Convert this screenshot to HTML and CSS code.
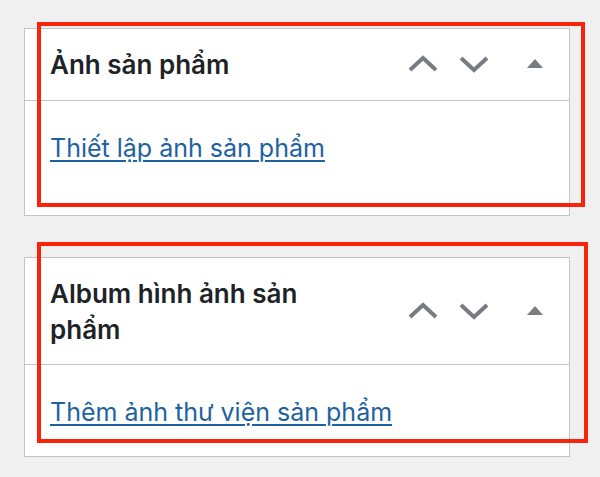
FILE: index.html
```html
<!DOCTYPE html>
<html lang="vi">
<head>
<meta charset="utf-8">
<title>Metaboxes</title>
<link rel="stylesheet" href="styles.css">
</head>
<body>
<div class="page">
  <div class="box box-image">
    <div class="box-head">
      <h2 class="box-title">Ảnh sản phẩm</h2>
      <div class="actions">
        <button class="act"><svg width="30" height="18" viewBox="0 0 30 18"><polyline points="2,15 15,3 28,15" fill="none" stroke="#787c82" stroke-width="4"/></svg></button>
        <button class="act"><svg width="30" height="18" viewBox="0 0 30 18"><polyline points="2,3 15,15 28,3" fill="none" stroke="#787c82" stroke-width="4"/></svg></button>
        <button class="act toggle"><svg width="16" height="9" viewBox="0 0 16 9"><polygon points="0,9 8,0 16,9" fill="#787c82"/></svg></button>
      </div>
    </div>
    <div class="box-body body-image">
      <a class="box-link" href="#">Thiết lập ảnh sản phẩm</a>
    </div>
  </div>

  <div class="box box-gallery">
    <div class="box-head">
      <h2 class="box-title">Album hình ảnh sản phẩm</h2>
      <div class="actions">
        <button class="act"><svg width="30" height="18" viewBox="0 0 30 18"><polyline points="2,15 15,3 28,15" fill="none" stroke="#787c82" stroke-width="4"/></svg></button>
        <button class="act"><svg width="30" height="18" viewBox="0 0 30 18"><polyline points="2,3 15,15 28,3" fill="none" stroke="#787c82" stroke-width="4"/></svg></button>
        <button class="act toggle"><svg width="16" height="9" viewBox="0 0 16 9"><polygon points="0,9 8,0 16,9" fill="#787c82"/></svg></button>
      </div>
    </div>
    <div class="box-body body-gallery">
      <a class="box-link" href="#">Thêm ảnh thư viện sản phẩm</a>
    </div>
  </div>

  <div class="mark mark-1"></div>
  <div class="mark mark-2"></div>
</div>
</body>
</html>
```

FILE: styles.css
```css
* { box-sizing: border-box; }
html, body {
  margin: 0;
  background: #f0f0f1;
  font-family: Inter, "Noto Sans", sans-serif;
}
.page {
  position: relative;
  width: 600px;
  height: 477px;
  padding: 28px 0 0 24px;
}
.box {
  width: 546px;
  background: #fff;
  border: 1px solid #c3c4c7;
}
.box-gallery { margin-top: 41px; }
.box-head {
  display: flex;
  align-items: center;
  border-bottom: 1px solid #c3c4c7;
  padding: 16px 9px 17px 25px;
}
.box-gallery .box-head { padding-bottom: 16px; }
.box-title {
  flex: 1;
  margin: 0;
  padding: 2px 60px 0 0;
  font-size: 26px;
  line-height: 36px;
  font-weight: 600;
  color: #1d2327;
}
.actions {
  display: flex;
  align-items: center;
}
.act {
  width: 51px;
  height: 35px;
  padding: 0;
  border: 0;
  background: none;
  display: flex;
  align-items: center;
  justify-content: center;
}
.act.toggle { margin-left: 10px; }
.act.toggle svg { margin-top: -2px; }
.box-body { padding: 30px 25px 0; }
.body-image { height: 114px; }
.body-gallery { height: 91px; }
.box-link {
  font-size: 25px;
  line-height: 35px;
  color: #1e62a1;
  text-decoration: underline;
  text-underline-offset: 3px;
  text-decoration-thickness: 1.5px;
}
.mark {
  position: absolute;
  border: 4px solid #f8230a;
  pointer-events: none;
}
.mark-1 { left: 37px; top: 22px; width: 548px; height: 185px; }
.mark-2 { left: 37px; top: 242px; width: 551px; height: 201px; }
```
